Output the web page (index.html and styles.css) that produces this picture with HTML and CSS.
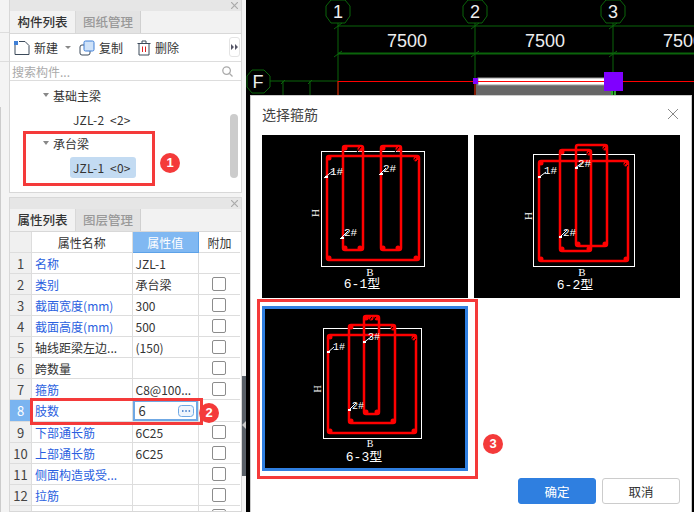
FILE: index.html
```html
<!DOCTYPE html>
<html>
<head>
    <meta charset="utf-8">
    <link rel="stylesheet" href="styles.css">
</head>
<body>
    <div class="app">
        <div class="edge">
            <div class="edge-top"></div>
            <div class="edge-bar"></div>
            <div class="edge-gap"></div>
            <div class="edge-rest"></div>
        </div>
        <div class="side">
            <!-- 构件列表 -->
            <div class="panel list-panel">
                <div class="panel-head">
                    <svg width="7" height="7" viewBox="0 0 7 7"><path d="M0 0L7 7M7 0L0 7" stroke="#aaa" stroke-width="1.200"/></svg>
                </div>
                <div class="tabs">
                    <div class="tab active">构件列表</div>
                    <div class="tab">图纸管理</div>
                </div>
                <div class="toolbar">
                    <div class="tool tool-new">
                        <svg width="16" height="16" viewBox="0 0 16 16"><path class="ico" d="M1 5V14.500H15V5.500L11 1.500H5"/><rect x="0" y="1" width="4" height="4" fill="#3f7fd6"/></svg>
                        <span>新建</span>
                        <i class="caret"></i>
                    </div>
                    <div class="tool">
                        <svg width="16" height="16" viewBox="0 0 16 16"><rect class="ico" x="1" y="5" width="10" height="10" rx="2"/><rect x="5" y="1" width="10" height="10" rx="1.500" fill="#cfe2f8" stroke="#3f7fd6"/></svg>
                        <span>复制</span>
                    </div>
                    <div class="tool">
                        <svg width="14" height="16" viewBox="0 0 14 16"><path class="ico" d="M0.500 3.500H13.500M2 3.500V15H12V3.500M5 3.500V1H9V3.500"/><path d="M5.500 6.500V12M8.500 6.500V12" stroke="#e02020" fill="none"/></svg>
                        <span>删除</span>
                    </div>
                    <div class="more">
                        <svg width="7" height="6" viewBox="0 0 7 6"><path d="M0 0L3 3L0 6ZM4 0L7 3L4 6Z" fill="#556"/></svg>
                    </div>
                </div>
                <div class="search">
                    <span>搜索构件...</span>
                    <svg width="11" height="11" viewBox="0 0 11 11"><circle cx="4.600" cy="4.600" r="3.800" fill="none" stroke="#aaa" stroke-width="1.300"/><path d="M7.500 7.500L10.500 10.500" stroke="#aaa" stroke-width="1.300"/></svg>
                </div>
                <div class="tree">
                    <div class="tree-group"><i class="caret"></i>基础主梁</div>
                    <div class="tree-item">JZL-2 &nbsp;&lt;2&gt;</div>
                    <div class="tree-group"><i class="caret"></i>承台梁</div>
                    <div class="tree-item selected">JZL-1 &nbsp;&lt;0&gt;</div>
                    <div class="tree-scroll"></div>
                </div>
            </div>

            <!-- 属性列表 -->
            <div class="panel prop-panel">
                <div class="panel-head">
                    <svg width="7" height="7" viewBox="0 0 7 7"><path d="M0 0L7 7M7 0L0 7" stroke="#aaa" stroke-width="1.200"/></svg>
                </div>
                <div class="tabs">
                    <div class="tab active">属性列表</div>
                    <div class="tab">图层管理</div>
                </div>
                <table class="props">
                    <tr><th class="num"></th><th class="name-col">属性名称</th><th class="val-head">属性值</th><th class="add-col">附加</th></tr>
                    <tr><td class="num">1</td><td class="link">名称</td><td>JZL-1</td><td></td></tr>
                    <tr><td class="num">2</td><td class="link">类别</td><td>承台梁</td><td class="add"><i class="check"></i></td></tr>
                    <tr><td class="num">3</td><td class="link">截面宽度(mm)</td><td>300</td><td class="add"><i class="check"></i></td></tr>
                    <tr><td class="num">4</td><td class="link">截面高度(mm)</td><td>500</td><td class="add"><i class="check"></i></td></tr>
                    <tr><td class="num">5</td><td>轴线距梁左边...</td><td>(150)</td><td class="add"><i class="check"></i></td></tr>
                    <tr><td class="num">6</td><td>跨数量</td><td></td><td class="add"><i class="check"></i></td></tr>
                    <tr><td class="num">7</td><td class="link">箍筋</td><td>C8@100...</td><td class="add"><i class="check"></i></td></tr>
                    <tr><td class="num current">8</td><td class="link">肢数</td><td class="editing"><div class="edit-box"><span>6</span><svg class="dots" width="16" height="12" viewBox="0 0 16 12"><rect x="0.500" y="0.500" width="15" height="11" rx="3" fill="#eef5fd" stroke="#6fa8e4"/><path d="M4 6h1.500M7.300 6h1.500M10.600 6h1.500" stroke="#2f6fc4" stroke-width="1.500"/></svg></div></td><td class="add"></td></tr>
                    <tr><td class="num">9</td><td class="link">下部通长筋</td><td>6C25</td><td class="add"><i class="check"></i></td></tr>
                    <tr><td class="num">10</td><td class="link">上部通长筋</td><td>6C25</td><td class="add"><i class="check"></i></td></tr>
                    <tr><td class="num">11</td><td class="link">侧面构造或受...</td><td></td><td class="add"><i class="check"></i></td></tr>
                    <tr><td class="num">12</td><td class="link">拉筋</td><td></td><td class="add"><i class="check"></i></td></tr>
                    <tr><td class="num">13</td><td class="link">材质</td><td>现浇混凝土</td><td class="add"><i class="check"></i></td></tr>
                </table>
            </div>
        </div>
        <div class="splitter"><div class="grip"></div></div>

        <div class="canvas">
            <svg class="cad" width="448" height="512" viewBox="246 0 448 512">
                <g class="grid-line">
                    <path d="M338 23V95M475 23V95M613 23V95M338 26H694M270 81H338M283 81V95M310 81V95"/>
                    <path class="thick" d="M338 53.500H694"/>
                    <path d="M334 29L342 23M471 29L479 23M609 29L617 23M334 57L342 51M471 57L479 51M609 57L617 51M281 84L285 80M308 84L312 80"/>
                    <polygon points="331,0 345,0 350,6 350,16 345,23 331,23 326,16 326,6"/>
                    <polygon points="468,0 482,0 487,6 487,16 482,23 468,23 463,16 463,6"/>
                    <polygon points="606,0 620,0 625,6 625,16 620,23 606,23 601,16 601,6"/>
                    <polygon points="252,70 264,70 270,76 270,87 264,93 252,93 247,87 247,76"/>
                </g>
                <text class="axis" x="338" y="18">1</text>
                <text class="axis" x="475" y="18">2</text>
                <text class="axis" x="613" y="18">3</text>
                <text class="axis" x="258" y="88">F</text>
                <text class="dim" x="407" y="47">7500</text>
                <text class="dim" x="545" y="47">7500</text>
                <text class="dim" x="683" y="47">7500</text>
                <rect x="476" y="84" width="135" height="12" fill="#666"/>
                <rect x="478" y="78" width="128" height="7" fill="#fff" stroke="#999"/>
                <path d="M338 81.500H694M338 81V96M475 81V96" stroke="#f00" fill="none"/>
                <rect x="473" y="78" width="5" height="6" fill="#8000ff"/>
                <rect x="604" y="72" width="19" height="19" fill="#8000ff"/>
                <path d="M612 91V96M615 91V96" stroke="#3ddc3d" stroke-width="1.500"/>
            </svg>

            <div class="dialog">
                <div class="dialog-head">
                    <span>选择箍筋</span>
                    <svg width="12" height="12" viewBox="0 0 12 12"><path d="M1 1L11 11M11 1L1 11" stroke="#888" fill="none"/></svg>
                </div>
                <div class="types">
                    <div class="type">
                        <svg class="rebar" width="206" height="163" viewBox="0 0 206 163">
                            <rect class="frame" x="59.500" y="16.500" width="103" height="115"/>
                            <rect class="bar" x="65" y="21" width="92" height="104" rx="2"/>
                            <rect class="bar" x="81" y="11" width="20" height="104" rx="2"/>
                            <rect class="bar" x="119" y="11" width="20" height="104" rx="2"/>
                            <path class="dot" d="M67 23h.01M67 123h.01M154 123h.01M154 24h.01M83 13h.01M83 113h.01M98 113h.01M98 14h.01M121 13h.01M121 113h.01M136 113h.01M136 14h.01"/>
                            <path class="barb" d="M150 28l4-5M152 30l4-5M95 17l4-5M133 17l4-5"/>
                            <path class="lead" d="M62 43L72 35M117 40L124 33M78 104L86 96"/>
                            <path class="lead-end" d="M63 42h3M118 39h3M79 103h3"/>
                            <text class="mark" x="68" y="40">1#</text>
                            <text class="mark" x="121" y="37">2#</text>
                            <text class="mark" x="82" y="101">2#</text>
                            <text class="letter" transform="translate(57 78) rotate(-90)" text-anchor="middle">H</text>
                            <text class="letter" x="108" y="141" text-anchor="middle">B</text>
                            <text class="caption" x="100" y="153">6-1型</text>
                        </svg>
                    </div>
                    <div class="type">
                        <svg class="rebar" width="206" height="163" viewBox="0 0 206 163">
                            <rect class="frame" x="59.500" y="19.500" width="101" height="112"/>
                            <rect class="bar" x="65" y="26" width="89" height="100" rx="2"/>
                            <rect class="bar" x="86" y="15" width="31" height="101" rx="2"/>
                            <rect class="bar" x="102" y="10" width="31" height="101" rx="2"/>
                            <path class="dot" d="M67 28h.01M67 124h.01M152 124h.01M152 29h.01M88 17h.01M88 114h.01M115 114h.01M115 18h.01M104 109h.01M131 109h.01M131 13h.01"/>
                            <path class="barb" d="M148 33l4-5M150 35l4-5M111 22l4-5M127 17l4-5"/>
                            <path class="lead" d="M64 43L72 37M101 33L109 27M85 103L93 95"/>
                            <path class="lead-end" d="M64 42h3M101 33h3M85 102h3"/>
                            <text class="mark" x="70" y="39">1#</text>
                            <text class="mark" x="104" y="32">2#</text>
                            <text class="mark" x="89" y="101">2#</text>
                            <text class="letter" transform="translate(58 81) rotate(-90)" text-anchor="middle">H</text>
                            <text class="letter" x="108" y="141" text-anchor="middle">B</text>
                            <text class="caption" x="101" y="154">6-2型</text>
                        </svg>
                    </div>
                    <div class="type selected">
                        <svg class="rebar" width="200" height="159" viewBox="3 3 200 159">
                            <rect class="frame" x="61.500" y="22.500" width="98" height="110"/>
                            <rect class="bar" x="66" y="29" width="88" height="98" rx="2"/>
                            <rect class="bar" x="87" y="19" width="46" height="98" rx="2"/>
                            <rect class="bar" x="102" y="10" width="15" height="98" rx="2"/>
                            <path class="dot" d="M68 31h.01M68 125h.01M152 125h.01M152 32h.01M89 21h.01M89 115h.01M131 115h.01M131 22h.01M104 106h.01M115 106h.01M104 12h.01M109 12h.01M115 12h.01"/>
                            <path class="barb" d="M148 36l4-5M150 38l4-5M127 26l4-5M106 16l4-5M110 16l4-5"/>
                            <path class="lead" d="M65 47L72 41M101 37L109 31M86 105L94 97"/>
                            <path class="lead-end" d="M65 46h3M101 36h3M86 104h3"/>
                            <text class="mark small" x="71" y="44">1#</text>
                            <text class="mark small" x="106" y="34">3#</text>
                            <text class="mark small" x="90" y="103">2#</text>
                            <text class="letter small" transform="translate(59 83) rotate(-90)" text-anchor="middle">H</text>
                            <text class="letter small" x="108" y="141" text-anchor="middle">B</text>
                            <text class="caption" x="102" y="155">6-3型</text>
                        </svg>
                    </div>
                </div>
                <div class="dialog-foot">
                    <button class="primary">确定</button>
                    <button>取消</button>
                </div>
            </div>
        </div>

        <!-- 标注 -->
        <div class="note note-tree"></div>
        <div class="note note-row"></div>
        <div class="note note-type"></div>
        <div class="badge badge-1">1</div>
        <div class="badge badge-2">2</div>
        <div class="badge badge-3">3</div>
    </div>
</body>
</html>
```

FILE: styles.css
```css
html, body {
    margin: 0;
    padding: 0;
    height: 100%;
    overflow: hidden;
}
body {
    font-family: "Noto Sans CJK SC", "Open Sans", sans-serif;
    font-size: 12px;
    color: #333;
    background: #000;
}
.app {
    position: relative;
    display: flex;
    width: 694px;
    height: 512px;
    overflow: hidden;
}

.edge {
    width: 9px;
    flex: none;
    background: #f4f4f4;
}
.edge-top {
    height: 32px;
    border-bottom: 1px solid #ddd;
}
.edge-bar {
    height: 28px;
    border-bottom: 1px solid #ddd;
}
.edge-gap { height: 45px; }
.edge-rest {
    height: 405px;
    border-left: 1px solid #ccc;
}

.side {
    width: 233px;
    flex: none;
    background: #f4f4f4;
    display: flex;
    flex-direction: column;
    gap: 4px;
}
.panel {
    background: #fff;
    border: 1px solid #d8d8d8;
    border-top: none;
    overflow: hidden;
}
.list-panel { height: 192px; flex: none; }
.prop-panel { flex: 1; border-top: 1px solid #d8d8d8; }

.panel-head {
    height: 11px;
    background: #e6e6e6;
    display: flex;
    justify-content: flex-end;
    align-items: center;
    padding-right: 3px;
}
.tabs {
    display: flex;
    height: 22px;
    background: #f2f2f2;
    border-bottom: 1px solid #d8d8d8;
}
.tab {
    width: 64px;
    text-align: center;
    line-height: 22px;
    font-size: 12.500px;
    font-weight: 500;
    color: #999;
    background: #e3e3e3;
    border-right: 1px solid #d0d0d0;
}
.tab.active {
    width: 65px;
    color: #333;
    background: #f2f2f2;
    border-right: 1px solid #d8d8d8;
}

.toolbar {
    display: flex;
    align-items: center;
    height: 27px;
    padding-left: 4px;
    gap: 14px;
    border-bottom: 1px solid #ddd;
    position: relative;
}
.tool {
    display: flex;
    align-items: center;
    gap: 4px;
}
.tool-new { margin-right: -6px; }
.ico {
    fill: none;
    stroke: #3c4a5a;
}
.caret {
    display: inline-block;
    width: 0;
    height: 0;
    border: 3.500px solid transparent;
    border-top: 4px solid #888;
    border-bottom: none;
}
.tool .caret {
    margin-left: 3px;
    border-width: 3px;
    border-bottom: none;
}
.more {
    position: absolute;
    right: 1px;
    top: 3px;
    width: 9px;
    height: 18px;
    border: 1px solid #e4e4e4;
    border-radius: 3px;
    display: flex;
    align-items: center;
    justify-content: center;
}
.search {
    display: flex;
    align-items: center;
    justify-content: space-between;
    height: 18px;
    padding: 0 8px 0 2px;
    border-bottom: 1px solid #ddd;
    color: #aaa;
}

.tree {
    position: relative;
    height: 110px;
    padding-top: 2px;
    box-sizing: border-box;
    font-size: 12px;
}
.tree-group {
    display: flex;
    align-items: center;
    gap: 4px;
    height: 24px;
    padding-left: 33px;
    margin-bottom: 2px;
}
.tree-item {
    width: fit-content;
    height: 21px;
    line-height: 21px;
    margin: 0 0 1px 60px;
    padding: 0 5px 0 3px;
    border-radius: 3px;
    letter-spacing: 0.200px;
}
.tree-item.selected { background: #c3dbf2; }
.tree-scroll {
    position: absolute;
    right: 3px;
    top: 33px;
    width: 8px;
    height: 64px;
    background: #ccc;
    border-radius: 4px;
}

.props {
    border-collapse: collapse;
    table-layout: fixed;
    width: 230px;
    background: #fff;
}
.props th, .props td {
    height: 20px;
    padding: 0 3px;
    border: 1px solid #ddd;
    font-weight: 400;
    white-space: nowrap;
    overflow: hidden;
}
.props th { border-top: none; }
.props .num {
    width: 15px;
    background: #f0f0f0;
    text-align: center;
    font-size: 13px;
    color: #444;
    border-left: none;
}
.props .name-col { width: 93px; text-align: center; }
.props .val-head {
    width: 59px;
    background: #80b8f2;
    color: #fff;
    text-align: center;
    border: 1px solid #5da2e8;
    border-top: none;
}
.props .add-col { width: 35px; text-align: center; border-right: none; }
.props td:last-child { border-right: none; }
.props .link { color: #2a5fe0; }
.props .num.current {
    background: #7ab4f0;
    color: #fff;
}
.props .add { text-align: center; padding: 0; }
.check {
    display: block;
    width: 12px;
    height: 12px;
    margin: 0 auto;
    border: 1px solid #8c8c8c;
    border-radius: 2px;
}
.props .editing { padding: 0; }
.edit-box {
    display: flex;
    align-items: center;
    justify-content: space-between;
    height: 17px;
    padding: 0 2px 0 4px;
    border: 2px solid #6fa8e4;
    font-size: 13px;
}
.dots { flex: none; }

.splitter {
    width: 4px;
    flex: none;
    background: #f4f4f4;
    padding-top: 376px;
    box-sizing: border-box;
}
.grip {
    position: relative;
    width: 4px;
    height: 100px;
    background: #596068;
}
.grip::after {
    content: "";
    position: absolute;
    left: 0;
    top: 45px;
    border: 4px solid transparent;
    border-left: none;
    border-right: 4px solid #c8c8c8;
}

.canvas {
    position: relative;
    flex: 1;
    background: #000;
}
.cad {
    position: absolute;
    left: 0;
    top: 0;
}
.grid-line path, .grid-line polygon {
    fill: none;
    stroke: #0a640a;
    stroke-width: 1;
}
.grid-line .thick { stroke-width: 2; }
.axis {
    fill: #eee;
    font: 18px "Liberation Sans", sans-serif;
    text-anchor: middle;
}
.dim {
    fill: #eee;
    font: 18px "Liberation Sans", sans-serif;
    text-anchor: middle;
}

.dialog {
    position: absolute;
    left: 4px;
    top: 95px;
    width: 442px;
    height: 417px;
    box-sizing: border-box;
    background: #fff;
    border: 1px solid #ccc;
    border-bottom: none;
}
.dialog-head {
    display: flex;
    align-items: center;
    justify-content: space-between;
    height: 36px;
    padding: 0 12px 3px 11px;
    font-size: 14px;
    color: #444;
}
.types {
    display: grid;
    grid-template-columns: 206px 206px;
    gap: 8px 6px;
    padding-left: 11px;
}
.type {
    height: 163px;
    background: #000;
    line-height: 0;
}
.type.selected {
    box-sizing: border-box;
    height: 165px;
    border: 3px solid #2f7fe0;
}
.rebar { display: block; }
.frame {
    fill: none;
    stroke: #fff;
}
.bar {
    fill: none;
    stroke: #f00;
    stroke-width: 2.500;
}
.dot {
    fill: none;
    stroke: #f00;
    stroke-width: 5;
    stroke-linecap: round;
}
.barb {
    fill: none;
    stroke: #000;
    stroke-width: 1;
}
.lead {
    fill: none;
    stroke: #fff;
}
.lead-end {
    fill: none;
    stroke: #fff;
    stroke-width: 2;
}
.mark {
    fill: #fff;
    font: 11px "Liberation Mono", monospace;
}
.mark.small { font-size: 10px; }
.letter {
    fill: #fff;
    font: 11px "Liberation Serif", serif;
}
.letter.small { font-size: 10px; }
.caption {
    fill: #fff;
    font: 13px "Liberation Mono", "Noto Sans CJK SC", sans-serif;
    text-anchor: middle;
}
.dialog-foot {
    position: absolute;
    right: 11px;
    bottom: 8px;
    display: flex;
    gap: 6px;
}
button {
    width: 78px;
    height: 26px;
    padding: 0;
    font: 12.500px "Noto Sans CJK SC", sans-serif;
    color: #333;
    background: #fff;
    border: 1px solid #ccc;
    border-radius: 3px;
}
button.primary {
    color: #fff;
    background: #2f7fe0;
    border-color: #2f7fe0;
}

.note {
    position: absolute;
    box-sizing: border-box;
    border: 3px solid #f43a3a;
}
.note-tree { left: 23px; top: 131px; width: 132px; height: 55px; }
.note-row { left: 30px; top: 398px; width: 173px; height: 27px; }
.note-type { left: 257px; top: 299px; width: 221px; height: 180px; }
.badge {
    position: absolute;
    width: 20px;
    height: 20px;
    border-radius: 50%;
    background: #f43a3a;
    color: #fff;
    font: 700 13px/20px "Liberation Sans", sans-serif;
    text-align: center;
}
.badge-1 { left: 160px; top: 153px; }
.badge-2 { left: 199px; top: 403px; }
.badge-3 { left: 483px; top: 434px; }
```
